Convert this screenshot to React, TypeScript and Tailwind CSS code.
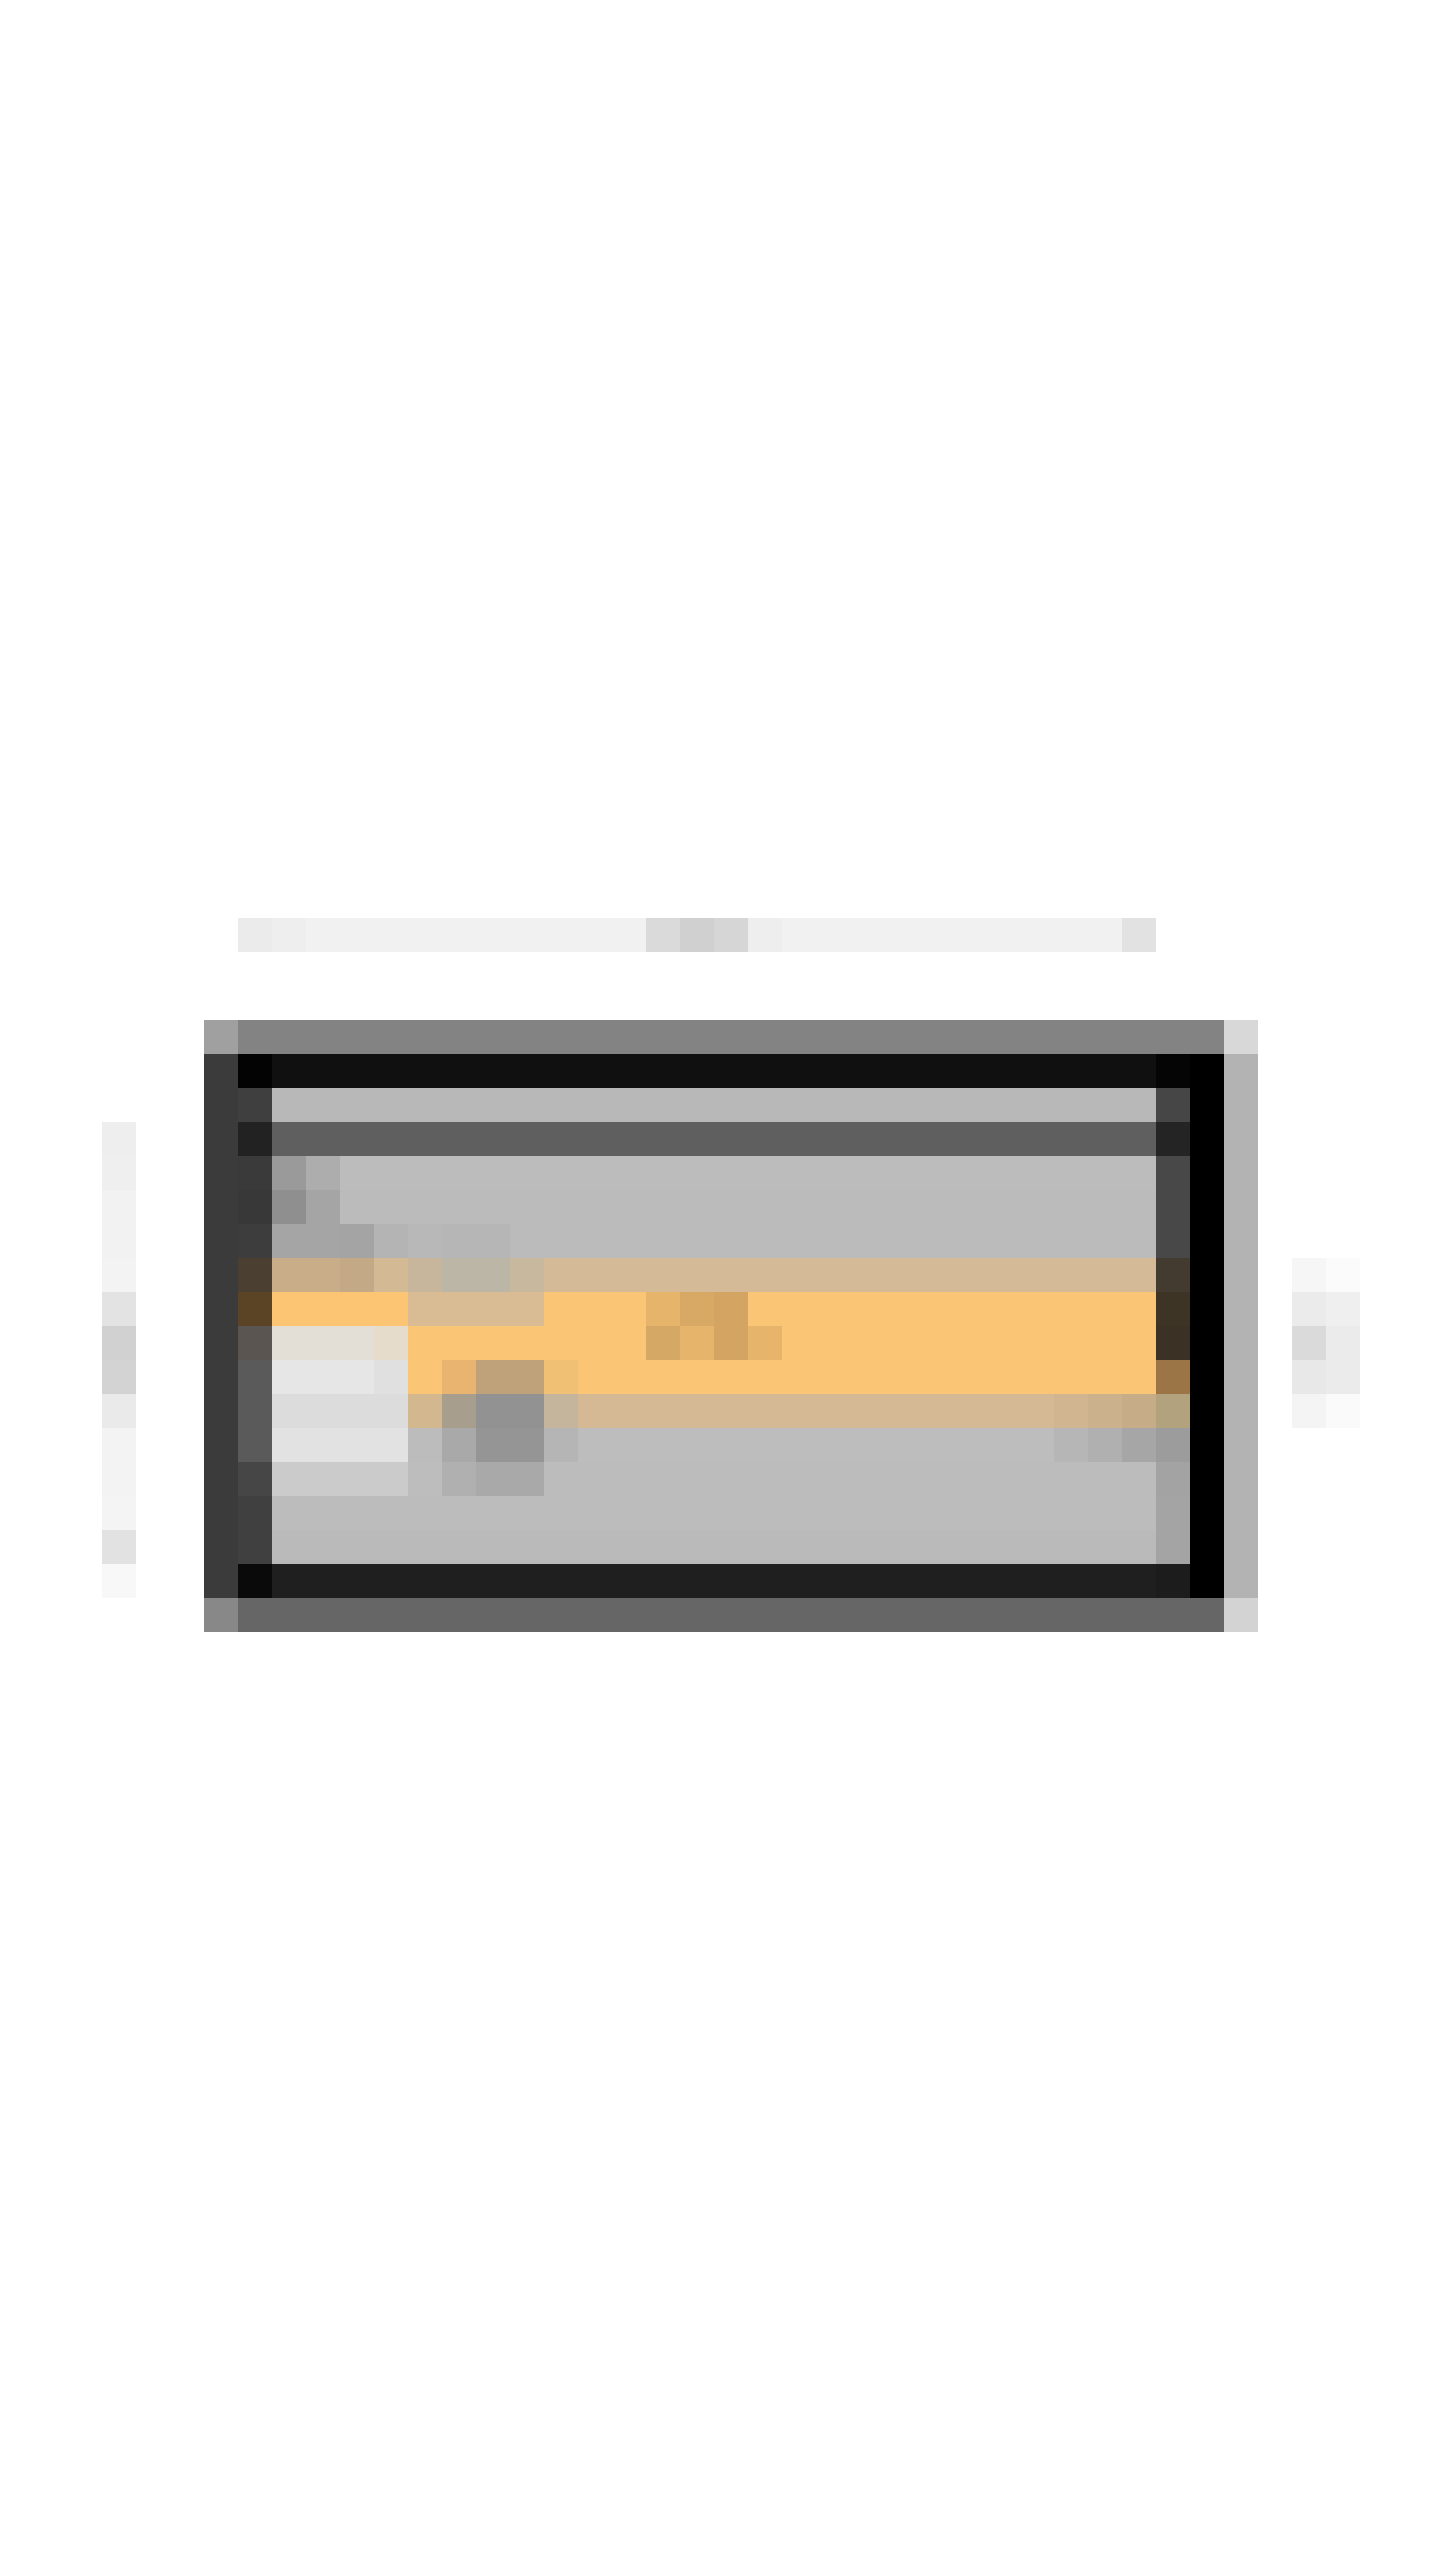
// Blurred preview card: a framed panel with a highlighted row, a caption bar above
// and two faint side strips. Every block sits on a 34px grid.

type Line = { edge: string; cells: string[]; side: string };

const CAPTION = [
  'w-[34px] bg-[#ebebeb]',
  'w-[34px] bg-[#eeeeee]',
  'w-[340px] bg-[#f1f1f1]',
  'w-[34px] bg-[#dadada]',
  'w-[34px] bg-[#d0d0d0]',
  'w-[34px] bg-[#d6d6d6]',
  'w-[34px] bg-[#eeeeee]',
  'w-[340px] bg-[#f1f1f1]',
  'w-[34px] bg-[#e2e2e2]',
];

// inner rows of the panel: left edge cell, 26 cells of content, right edge cell
const LINES: Line[] = [
  { edge: 'bg-[#3f3f3f]', cells: ['w-[884px] bg-[#b8b8b8]'], side: 'bg-[#464646]' },
  { edge: 'bg-[#222222]', cells: ['w-[884px] bg-[#5f5f5f]'], side: 'bg-[#242424]' },
  {
    edge: 'bg-[#3a3a3a]',
    cells: ['w-[34px] bg-[#9a9a9a]', 'w-[34px] bg-[#adadad]', 'w-[816px] bg-[#bcbcbc]'],
    side: 'bg-[#484848]',
  },
  {
    edge: 'bg-[#383838]',
    cells: ['w-[34px] bg-[#8f8f8f]', 'w-[34px] bg-[#a5a5a5]', 'w-[816px] bg-[#bbbbbb]'],
    side: 'bg-[#484848]',
  },
  {
    edge: 'bg-[#3d3d3d]',
    cells: [
      'w-[68px] bg-[#a5a5a5]',
      'w-[34px] bg-[#a4a4a4]',
      'w-[34px] bg-[#b4b4b4]',
      'w-[34px] bg-[#b8b8b8]',
      'w-[68px] bg-[#b6b6b6]',
      'w-[646px] bg-[#bbbbbb]',
    ],
    side: 'bg-[#484848]',
  },
  {
    edge: 'bg-[#4a3f30]',
    cells: [
      'w-[68px] bg-[#c8ad88]',
      'w-[34px] bg-[#c3a985]',
      'w-[34px] bg-[#d4ba94]',
      'w-[34px] bg-[#c8b69c]',
      'w-[68px] bg-[#bcb6a6]',
      'w-[34px] bg-[#c8b89e]',
      'w-[612px] bg-[#d4ba96]',
    ],
    side: 'bg-[#433a30]',
  },
  {
    edge: 'bg-[#5a4425]',
    cells: [
      'w-[136px] bg-[#fbc574]',
      'w-[136px] bg-[#d9bc93]',
      'w-[102px] bg-[#fbc576]',
      'w-[34px] bg-[#e6b46b]',
      'w-[34px] bg-[#d8a865]',
      'w-[34px] bg-[#d4a463]',
      'w-[408px] bg-[#fbc576]',
    ],
    side: 'bg-[#3e3426]',
  },
  {
    edge: 'bg-[#5b5551]',
    cells: [
      'w-[102px] bg-[#e3dfd6]',
      'w-[34px] bg-[#e6dccb]',
      'w-[238px] bg-[#fbc576]',
      'w-[34px] bg-[#d6a865]',
      'w-[34px] bg-[#e6b46b]',
      'w-[34px] bg-[#d4a463]',
      'w-[34px] bg-[#e6b46b]',
      'w-[374px] bg-[#fbc576]',
    ],
    side: 'bg-[#3b3125]',
  },
  {
    edge: 'bg-[#5a5a5a]',
    cells: [
      'w-[102px] bg-[#e6e6e6]',
      'w-[34px] bg-[#e0e0e0]',
      'w-[34px] bg-[#fbc576]',
      'w-[34px] bg-[#e8b470]',
      'w-[68px] bg-[#c0a27a]',
      'w-[34px] bg-[#f0c075]',
      'w-[578px] bg-[#fbc576]',
    ],
    side: 'bg-[#9b7546]',
  },
  {
    edge: 'bg-[#5a5a5a]',
    cells: [
      'w-[136px] bg-[#dcdcdc]',
      'w-[34px] bg-[#d3b78f]',
      'w-[34px] bg-[#a89e8e]',
      'w-[68px] bg-[#929292]',
      'w-[34px] bg-[#c4b59c]',
      'w-[476px] bg-[#d4b994]',
      'w-[34px] bg-[#d0b590]',
      'w-[34px] bg-[#ccb28c]',
      'w-[34px] bg-[#c6ad88]',
    ],
    side: 'bg-[#b3a27e]',
  },
  {
    edge: 'bg-[#5a5a5a]',
    cells: [
      'w-[136px] bg-[#e2e2e2]',
      'w-[34px] bg-[#bcbcbc]',
      'w-[34px] bg-[#a9a9a9]',
      'w-[68px] bg-[#959595]',
      'w-[34px] bg-[#b5b5b5]',
      'w-[476px] bg-[#bdbdbd]',
      'w-[34px] bg-[#b6b6b6]',
      'w-[34px] bg-[#b0b0b0]',
      'w-[34px] bg-[#a6a6a6]',
    ],
    side: 'bg-[#9c9c9c]',
  },
  {
    edge: 'bg-[#464646]',
    cells: [
      'w-[136px] bg-[#cbcbcb]',
      'w-[34px] bg-[#bdbdbd]',
      'w-[34px] bg-[#b0b0b0]',
      'w-[68px] bg-[#a9a9a9]',
      'w-[612px] bg-[#bcbcbc]',
    ],
    side: 'bg-[#a3a3a3]',
  },
  { edge: 'bg-[#404040]', cells: ['w-[884px] bg-[#bcbcbc]'], side: 'bg-[#a4a4a4]' },
  { edge: 'bg-[#404040]', cells: ['w-[884px] bg-[#bababa]'], side: 'bg-[#a4a4a4]' },
];

const LEFT_STRIP = [
  'bg-[#eeeeee]',
  'bg-[#efefef]',
  'bg-[#f2f2f2]',
  'bg-[#f2f2f2]',
  'bg-[#f3f3f3]',
  'bg-[#e3e3e3]',
  'bg-[#d1d1d1]',
  'bg-[#d3d3d3]',
  'bg-[#eaeaea]',
  'bg-[#f3f3f3]',
  'bg-[#f3f3f3]',
  'bg-[#f4f4f4]',
  'bg-[#e2e2e2]',
  'bg-[#f8f8f8]',
];

const RIGHT_STRIP = [
  ['bg-[#f6f6f6]', 'bg-[#fbfbfb]'],
  ['bg-[#ebebeb]', 'bg-[#efefef]'],
  ['bg-[#dadada]', 'bg-[#ebebeb]'],
  ['bg-[#e8e8e8]', 'bg-[#ebebeb]'],
  ['bg-[#f4f4f4]', 'bg-[#fafafa]'],
];

const Panel = () => (
  <div className="flex w-[1054px] flex-col">
    {/* outer ring, top */}
    <div className="flex h-[34px]">
      <div className="w-[34px] bg-[#a0a0a0]" />
      <div className="w-[986px] bg-[#838383]" />
      <div className="w-[34px] bg-[#d8d8d8]" />
    </div>

    <div className="flex flex-col border-x-[34px] border-l-[#3b3b3b] border-r-[#b3b3b3]">
      {/* inner frame, top */}
      <div className="flex h-[34px]">
        <div className="w-[34px] bg-[#030303]" />
        <div className="w-[884px] bg-[#101010]" />
        <div className="w-[34px] bg-[#050505]" />
        <div className="w-[34px] bg-black" />
      </div>

      {LINES.map((line, i) => (
        <div key={i} className="flex h-[34px] border-r-[34px] border-r-black">
          <div className={`w-[34px] ${line.edge}`} />
          {line.cells.map((cell, j) => (
            <div key={j} className={cell} />
          ))}
          <div className={`w-[34px] ${line.side}`} />
        </div>
      ))}

      {/* inner frame, bottom */}
      <div className="flex h-[34px]">
        <div className="w-[34px] bg-[#0a0a0a]" />
        <div className="w-[884px] bg-[#1f1f1f]" />
        <div className="w-[34px] bg-[#1c1c1c]" />
        <div className="w-[34px] bg-black" />
      </div>
    </div>

    {/* outer ring, bottom */}
    <div className="flex h-[34px]">
      <div className="w-[34px] bg-[#888888]" />
      <div className="w-[986px] bg-[#666666]" />
      <div className="w-[34px] bg-[#d3d3d3]" />
    </div>
  </div>
);

export default function App() {
  return (
    <div className="min-h-[2560px] w-[1440px] bg-white pt-[918px]">
      {/* caption bar */}
      <div className="ml-[238px] flex h-[34px] w-[918px]">
        {CAPTION.map((c, i) => (
          <div key={i} className={c} />
        ))}
      </div>

      <div className="mt-[68px] flex items-start pl-[102px]">
        <div className="mt-[102px] flex w-[34px] flex-col">
          {LEFT_STRIP.map((c, i) => (
            <div key={i} className={`h-[34px] ${c}`} />
          ))}
        </div>

        <div className="ml-[68px]">
          <Panel />
        </div>

        <div className="ml-[34px] mt-[238px] flex w-[68px] flex-col">
          {RIGHT_STRIP.map((row, i) => (
            <div key={i} className="flex h-[34px]">
              <div className={`w-[34px] ${row[0]}`} />
              <div className={`w-[34px] ${row[1]}`} />
            </div>
          ))}
        </div>
      </div>
    </div>
  );
}
